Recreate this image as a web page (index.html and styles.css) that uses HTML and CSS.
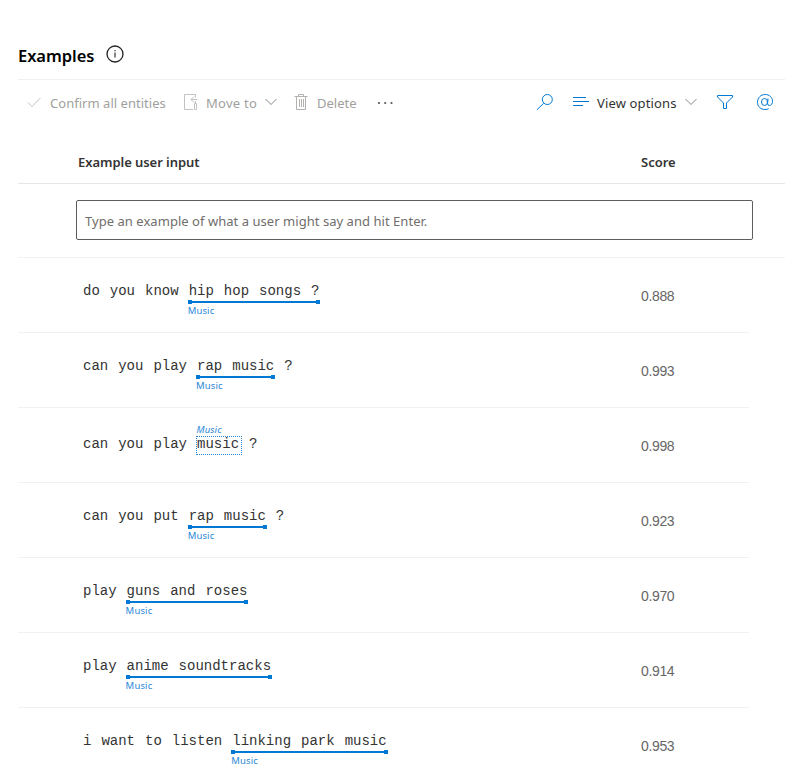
FILE: index.html
```html
<!DOCTYPE html>
<html lang="en">
<head>
<meta charset="utf-8">
<title>Examples</title>
<link rel="stylesheet" href="styles.css">
</head>
<body>
<main class="page">
  <header class="title">
    <h1>Examples</h1>
    <svg class="info" width="18" height="18" viewBox="0 0 18 18"><circle cx="9" cy="9" r="8" fill="none" stroke="#222" stroke-width="1.3"/><path d="M9 7.500v5M9 5v1.300" stroke="#222" stroke-width="1.1"/></svg>
  </header>
  <div class="toolbar">
    <div class="tools">
      <svg class="check" width="16" height="16" viewBox="0 0 16 16"><path d="M2 7.500l4 4 8.500-8.500"/></svg>
      <span class="t-confirm">Confirm all entities</span>
      <svg class="move" width="16" height="18" viewBox="0 0 16 18"><path d="M12.500 4.500V1.500H1.500V16.500H10M14.500 6.500H8M11 3.500L8 6.500L11 9.500M12.500 8V10.500M11.500 10.500H13.500V16.500H11.500Z"/></svg>
      <span class="t-move">Move to</span>
      <svg class="chev" width="12" height="8" viewBox="0 0 12 8"><path d="M.5 1L6 6.500L11.500 1"/></svg>
      <svg class="trash" width="14" height="18" viewBox="0 0 14 18"><path d="M.5 3.500H13.500M4.500 3.500V1.500H9.500V3.500M2.500 3.500V16.500H11.500V3.500M5.500 6V14M7.500 6V14M9.500 6V14"/></svg>
      <span class="t-delete">Delete</span>
      <svg class="more" width="18" height="4" viewBox="0 0 18 4"><circle cx="2" cy="2" r="1.1"/><circle cx="8.200" cy="2" r="1.1"/><circle cx="14.500" cy="2" r="1.1"/></svg>
    </div>
    <div class="views">
      <svg class="search" width="18" height="18" viewBox="0 0 18 18"><circle cx="11.300" cy="6.500" r="5"/><path d="M7.700 10.200L1 16.800"/></svg>
      <svg class="lines" width="16" height="12" viewBox="0 0 16 12"><path d="M0 1.500H13M0 5.500H16M0 9.500H10"/></svg>
      <span class="t-view">View options</span>
      <svg class="chev chev-view" width="12" height="8" viewBox="0 0 12 8"><path d="M.5 1L6 6.500L11.500 1"/></svg>
      <svg class="filter" width="18" height="16" viewBox="0 0 18 16"><path d="M1.500 1.500H16.500V3L10.500 9V14.500H7.500V9L1.500 3Z"/></svg>
      <svg class="at" width="18" height="18" viewBox="0 0 18 18"><ellipse cx="8.500" cy="9" rx="3" ry="3.500"/><path d="M12 5.500L11.600 10.300Q11.600 12.500 13.300 12.500C15.500 12.500 16.500 10.500 16.500 8.300C16.500 4.200 13.300 1.500 9.200 1.500C4.700 1.500 1.500 4.800 1.500 9.200C1.500 13.600 4.700 16.500 9 16.500Q11 16.500 12.700 15.700"/></svg>
    </div>
  </div>
  <div class="head"><span class="h-input">Example user input</span><span class="h-score">Score</span></div>
  <div class="entry"><input type="text" placeholder="Type an example of what a user might say and hit Enter."></div>
  <section class="rows">
    <div class="row"><div class="utt">do you know <span class="entity">hip hop songs ?<span class="bar"></span><span class="label">Music</span></span></div><span class="score">0.888</span></div>
    <div class="row"><div class="utt">can you play <span class="entity">rap music<span class="bar"></span><span class="label">Music</span></span> ?</div><span class="score">0.993</span></div>
    <div class="row"><div class="utt utt-predicted">can you play <span class="predicted">music<span class="label label-top">Music</span></span> ?</div><span class="score">0.998</span></div>
    <div class="row"><div class="utt">can you put <span class="entity">rap music<span class="bar"></span><span class="label">Music</span></span> ?</div><span class="score">0.923</span></div>
    <div class="row"><div class="utt">play <span class="entity">guns and roses<span class="bar"></span><span class="label">Music</span></span></div><span class="score">0.970</span></div>
    <div class="row"><div class="utt">play <span class="entity">anime soundtracks<span class="bar"></span><span class="label">Music</span></span></div><span class="score">0.914</span></div>
    <div class="row"><div class="utt">i want to listen <span class="entity">linking park music<span class="bar"></span><span class="label">Music</span></span></div><span class="score">0.953</span></div>
  </section>
</main>
</body>
</html>
```
FILE: styles.css
```css
* { box-sizing: border-box; }
body { margin: 0; background: #fff; color: #333; font: 13px/20px "Noto Sans", "Open Sans", sans-serif; }
.page { height: 773px; overflow: hidden; padding: 0 19px 0 18px; }
svg { display: block; flex: none; fill: none; stroke-width: 1; }
.title { height: 80px; padding-top: 43px; display: flex; align-items: flex-start; border-bottom: 1px solid #efefef; }
h1 { margin: 0; width: 88px; font-size: 16.5px; line-height: 26px; font-weight: 600; letter-spacing: -.05px; color: #000; white-space: nowrap; }
.info { margin-top: 2px; }
.toolbar { height: 62px; padding: 0 11px 16px 8px; display: flex; justify-content: space-between; }
.tools, .views { display: flex; align-items: center; white-space: nowrap; }
.tools { color: #a19f9d; stroke: #c4c2c0; }
.views { color: #333; stroke: #0078d4; }
.tools span, .views span { stroke: none; }
.t-confirm { width: 116px; margin: 0 17px 0 8px; letter-spacing: .03px; }
.t-move { width: 52px; margin: 0 7px 0 7px; letter-spacing: .25px; }
.chev { stroke: #888; margin-top: -2px; }
.trash { margin: -2px 9px 0 17px; stroke: #b4b2b0; }
.move { margin-top: -2px; }
.t-delete { width: 40px; margin-right: 20px; }
.more { fill: #555; stroke: none; }
.search { margin: -2px 19px 0 0; }
.lines { margin-top: -2px; stroke: #444; }
.views .lines { stroke: #0078d4; }
.t-view { width: 81px; margin: 0 7px 0 8px; letter-spacing: .15px; }
.filter { margin: -2px 22px 0 19px; }
.at { margin-top: -2px; }
.head { height: 42px; padding-left: 60px; display: flex; align-items: flex-start; font-weight: 600; border-bottom: 1px solid #e6e6e6; }
.head span { padding-top: 10px; }
.h-input { width: 563px; letter-spacing: -.05px; }
.entry { height: 74px; padding: 16px 32px 0 58px; border-bottom: 1px solid #f1f1f1; }
.entry input { width: 100%; height: 40px; padding: 2px 8px 0; border: 1px solid #605e5c; border-radius: 2px; font: inherit; letter-spacing: .04px; color: #333; outline: none; }
.entry input::placeholder { color: #706e6c; opacity: 1; }
.rows { width: 731px; }
.row { height: 75px; padding-left: 65px; display: flex; border-bottom: 1px solid #f1f1f1; }
.utt { width: 558px; padding-top: 23px; font: 14px/20px "Liberation Mono", monospace; word-spacing: 1.6px; color: #333; white-space: nowrap; }
.utt-predicted { padding-top: 26px; }
.score { padding-top: 28px; font-family: "Liberation Sans", sans-serif; font-size: 14px; letter-spacing: -.35px; color: #666; }
.entity, .predicted { position: relative; }
.bar { position: absolute; left: -1px; right: -1px; top: 17px; height: 4px; background: linear-gradient(#0078d4, #0078d4) 0 0 / 4px 4px no-repeat, linear-gradient(#0078d4, #0078d4) 100% 0 / 4px 4px no-repeat, linear-gradient(#0078d4, #0078d4) 0 1px / 100% 2px no-repeat; }
.label { position: absolute; left: -1px; top: 21px; font: 9.5px/14px "Noto Sans", sans-serif; letter-spacing: .15px; word-spacing: 0; color: #2b88d8; }
.predicted::after { content: ""; position: absolute; left: -1px; right: -3px; top: 0; height: 17px; border: 1px dotted #2b88d8; }
.label-top { top: -13px; left: -.5px; font-style: italic; }
```
